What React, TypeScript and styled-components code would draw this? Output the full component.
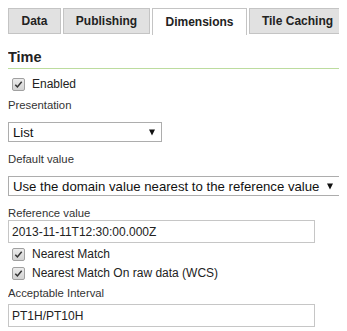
import styled, { createGlobalStyle } from "styled-components";

const GlobalStyle = createGlobalStyle`
  body {
    margin: 8px;
    background: #fff;
    font-family: "Liberation Sans", Arial, sans-serif;
    color: #333;
  }
`;

const TabBar = styled.div`
  display: flex;
  gap: 2px;
  height: 27px;
  align-items: flex-start;
`;

const Tab = styled.div<{ $active?: boolean; $width: number }>`
  box-sizing: border-box;
  flex-shrink: 0;
  width: ${(p) => p.$width}px;
  white-space: nowrap;
  height: ${(p) => (p.$active ? "27px" : "26px")};
  padding-bottom: 1px;
  display: flex;
  align-items: center;
  justify-content: center;
  font-size: 12px;
  font-weight: bold;
  color: #222;
  background: ${(p) => (p.$active ? "#fff" : "#e1e1e1")};
  border: 1px solid #c4c4c4;
  border-bottom: ${(p) => (p.$active ? "none" : "1px solid #c4c4c4")};
`;

const Heading = styled.h3`
  margin: 11px 0 0;
  height: 22px;
  line-height: 22px;
  font-size: 14.5px;
  font-weight: bold;
  color: #222;
  border-bottom: 1px solid #bcdc9e;
`;

const CheckRow = styled.label<{ $top: number }>`
  display: flex;
  align-items: center;
  gap: 7px;
  height: 18px;
  margin-top: ${(p) => p.$top}px;
  padding-left: 4px;
  font-size: 12px;
  color: #222;
`;

const Box = styled.span`
  width: 11px;
  height: 11px;
  border: 1px solid #a0a0a0;
  border-radius: 2px;
  background: linear-gradient(#ececec, #d2d2d2);
  display: flex;
  align-items: center;
  justify-content: center;
`;

const Label = styled.div<{ $top: number }>`
  margin-top: ${(p) => p.$top}px;
  height: 14px;
  line-height: 14px;
  font-size: 11.3px;
  color: #333;
`;

const Select = styled.div<{ $width: number; $top: number }>`
  box-sizing: border-box;
  width: ${(p) => p.$width}px;
  height: 20px;
  margin-top: ${(p) => p.$top}px;
  border: 1px solid #adadad;
  background: #fff;
  display: flex;
  align-items: center;
  gap: 5px;
  padding: 0 6px 0 4px;
  font-size: 13.2px;
  color: #111;
  white-space: nowrap;
  svg {
    margin-left: auto;
    flex-shrink: 0;
  }
`;

const Input = styled.div<{ $top: number }>`
  box-sizing: border-box;
  width: 307px;
  height: 23px;
  margin-top: ${(p) => p.$top}px;
  border: 1px solid #c6c6c6;
  background: #fff;
  display: flex;
  align-items: center;
  padding: 0 3px;
  font-size: 12px;
  color: #222;
`;

function Check() {
  return (
    <Box>
      <svg width="9" height="9" viewBox="0 0 9 9">
        <path d="M1.3 4.7 L3.4 6.9 L7.7 1.8" fill="none" stroke="#333" strokeWidth="1.5" />
      </svg>
    </Box>
  );
}

function Arrow() {
  return (
    <svg width="6" height="7" viewBox="0 0 6 7">
      <path d="M0 0.5 H6 L3 6.5 Z" fill="#111" />
    </svg>
  );
}

export default function App() {
  return (
    <>
      <GlobalStyle />
      <TabBar>
        <Tab $width={53}>Data</Tab>
        <Tab $width={87}>Publishing</Tab>
        <Tab $width={95} $active>
          Dimensions
        </Tab>
        <Tab $width={97}>Tile Caching</Tab>
      </TabBar>
      <Heading>Time</Heading>
      <CheckRow $top={6}>
        <Check />
        Enabled
      </CheckRow>
      <Label $top={5}>Presentation</Label>
      <Select $width={154} $top={10}>
        <span>List</span>
        <Arrow />
      </Select>
      <Label $top={10}>Default value</Label>
      <Select $width={332} $top={10}>
        <span>Use the domain value nearest to the reference value</span>
        <Arrow />
      </Select>
      <Label $top={10}>Reference value</Label>
      <Input $top={0}>2013-11-11T12:30:00.000Z</Input>
      <CheckRow $top={2}>
        <Check />
        Nearest Match
      </CheckRow>
      <CheckRow $top={1}>
        <Check />
        Nearest Match On raw data (WCS)
      </CheckRow>
      <Label $top={4}>Acceptable Interval</Label>
      <Input $top={4}>PT1H/PT10H</Input>
    </>
  );
}
